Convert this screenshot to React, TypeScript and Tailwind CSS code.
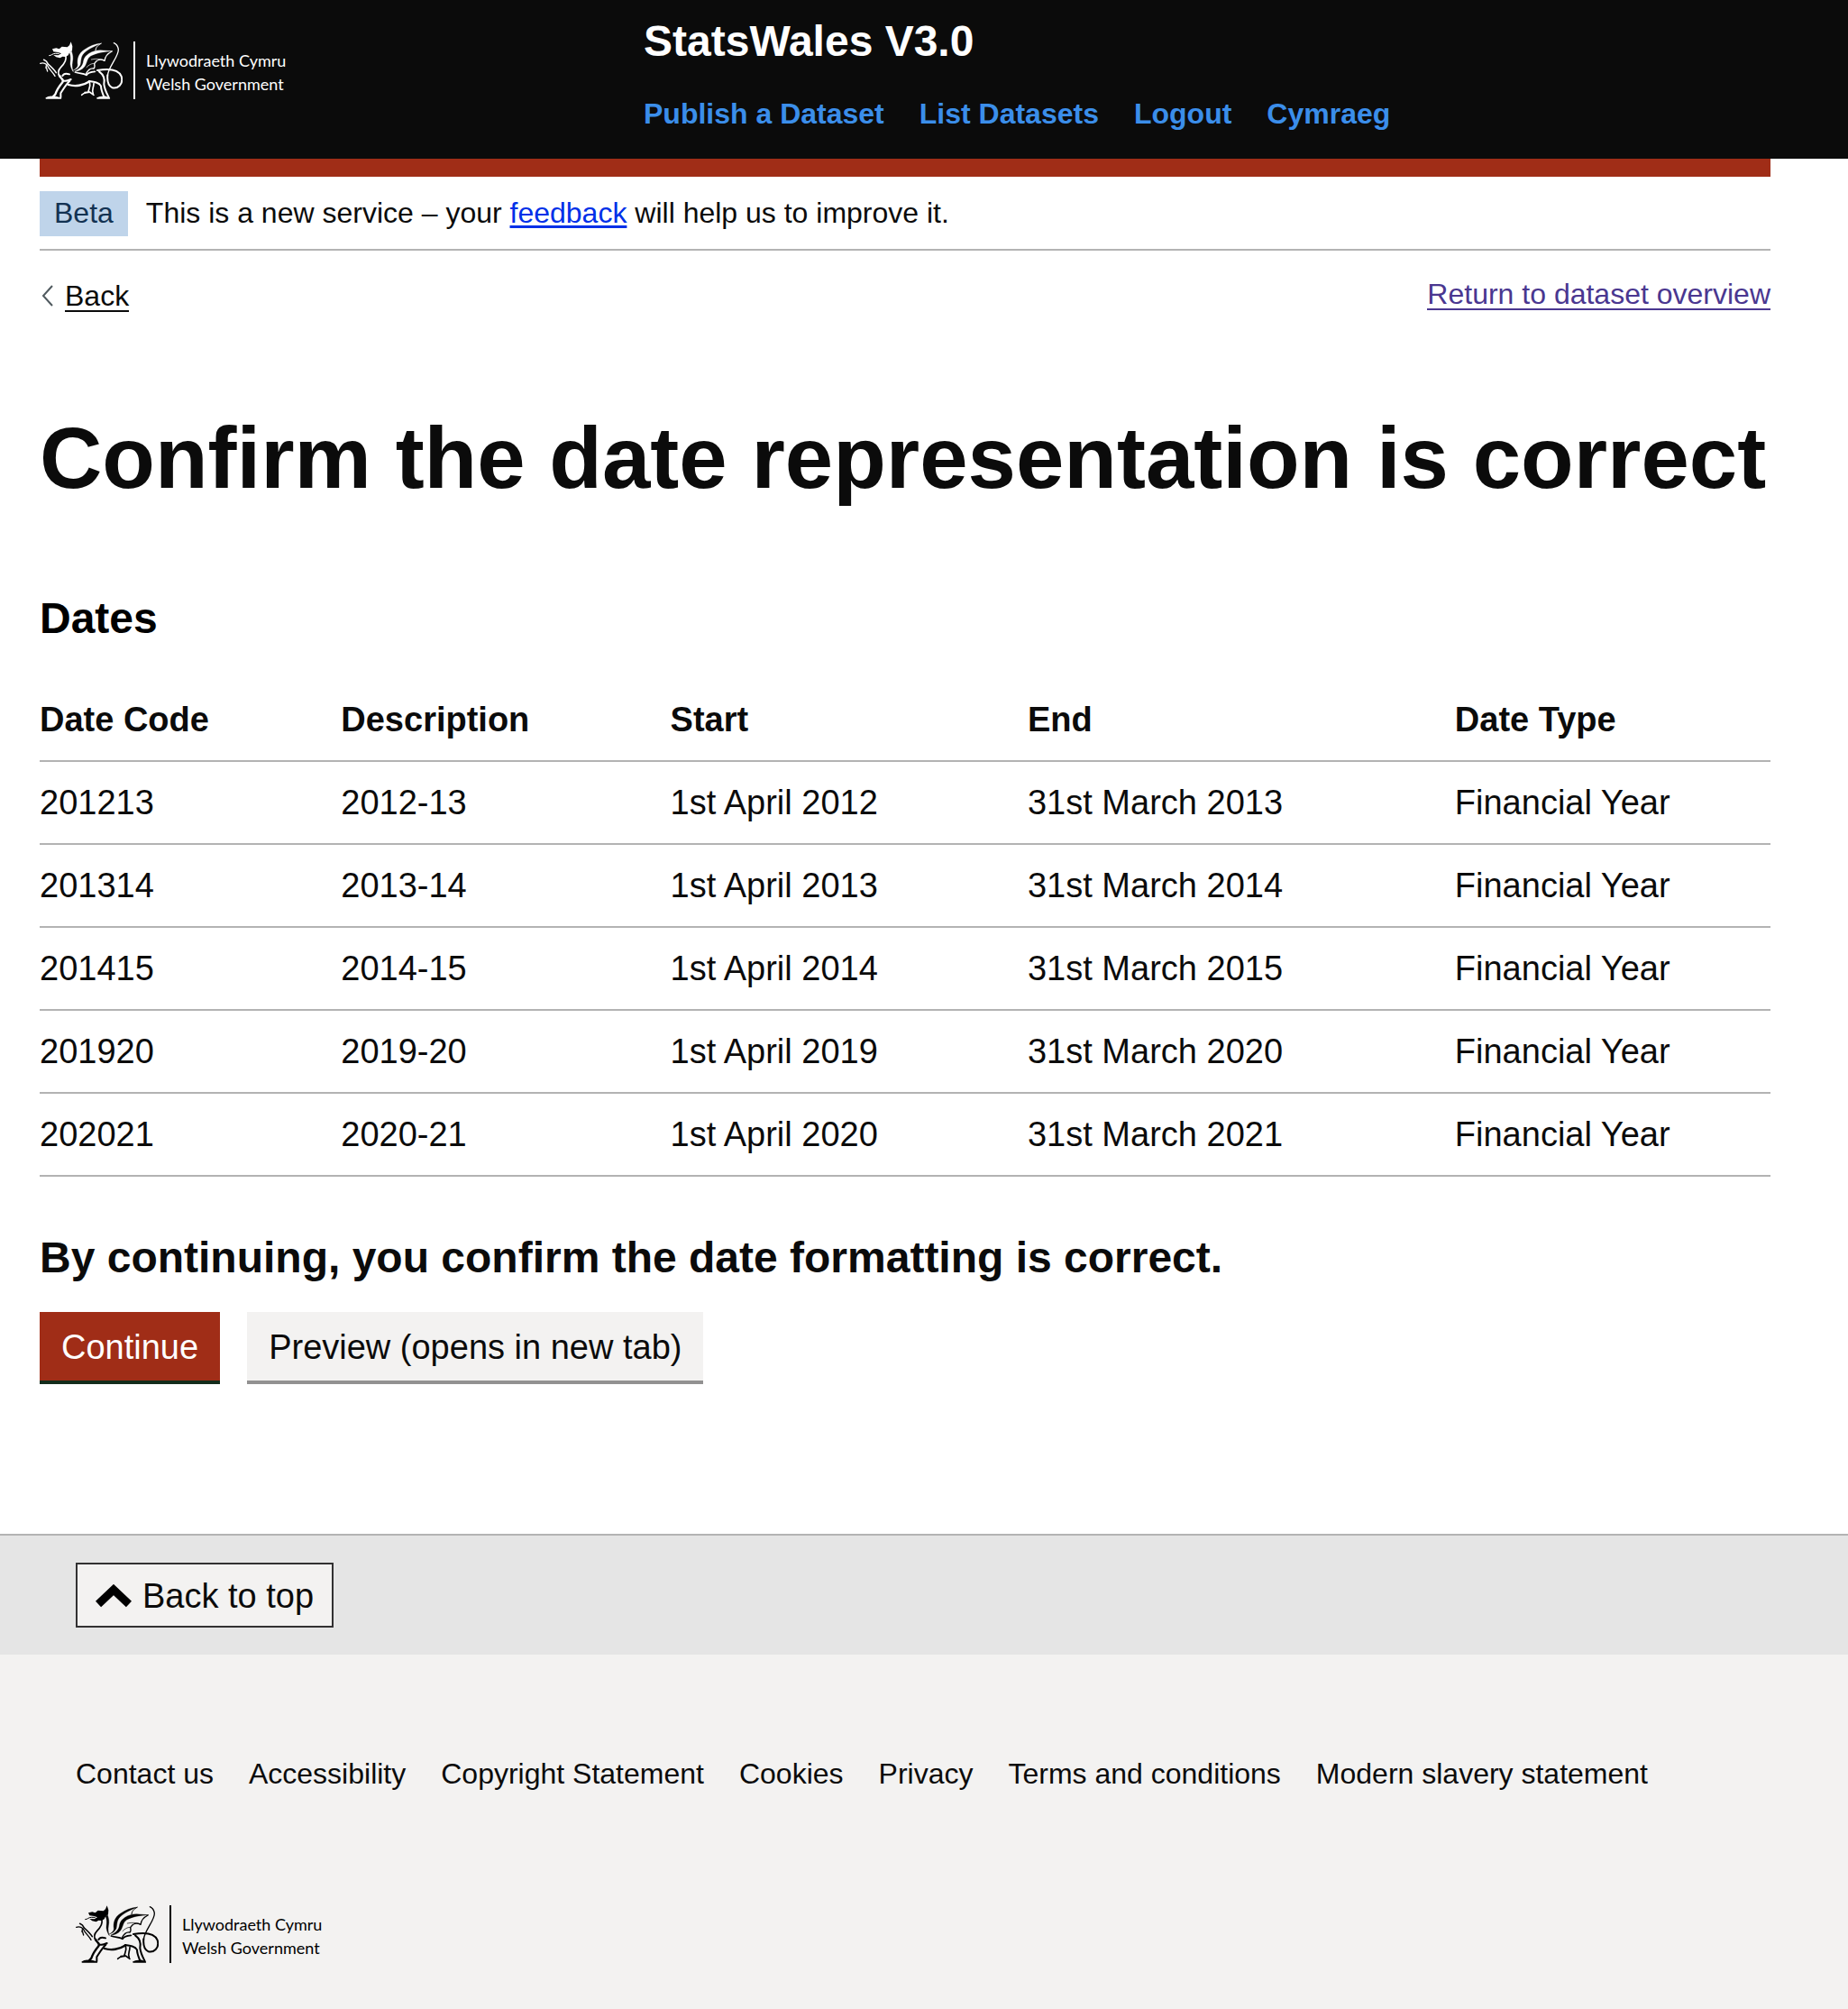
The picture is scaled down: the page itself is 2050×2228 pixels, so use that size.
import React from "react";

const rows = [
  ["201213", "2012-13", "1st April 2012", "31st March 2013", "Financial Year"],
  ["201314", "2013-14", "1st April 2013", "31st March 2014", "Financial Year"],
  ["201415", "2014-15", "1st April 2014", "31st March 2015", "Financial Year"],
  ["201920", "2019-20", "1st April 2019", "31st March 2020", "Financial Year"],
  ["202021", "2020-21", "1st April 2020", "31st March 2021", "Financial Year"],
];
const columns = ["Date Code", "Description", "Start", "End", "Date Type"];
const navLinks = ["Publish a Dataset", "List Datasets", "Logout", "Cymraeg"];
const footerLinks = [
  "Contact us",
  "Accessibility",
  "Copyright Statement",
  "Cookies",
  "Privacy",
  "Terms and conditions",
  "Modern slavery statement",
];

function Dragon() {
  return (
    <svg viewBox="42 48 276 192" className="h-16 w-23 shrink-0" fill="none" stroke="currentColor" strokeLinecap="round" strokeLinejoin="round" aria-hidden="true">
      {/* head */}
      <path fill="currentColor" stroke="none" d="M84 73 L97 70 L107 73 L116 65 L134 67 L141 61 L146 49 L151 64 L150 79 C144 82 140 86 137 94 L128 99 L118 98 L110 103 L97 100 L88 93 L104 94 L114 88 L104 84 L88 82Z" />
      <path strokeWidth="3" d="M74 95 C82 95 84 88 94 88 L106 88" />
      {/* neck */}
      <path fill="currentColor" strokeWidth="1" d="M141 84 C148 98 144 112 144 124 C146 136 150 144 154 149 C150 138 149 128 151 116 C154 102 152 92 148 80Z" />
      <path strokeWidth="5" d="M129 98 C132 112 122 124 113 133 C104 142 101 153 109 166" />
      {/* raised arm */}
      <path strokeWidth="5" d="M56 109 C64 112 67 116 70 123 C80 132 90 141 97 152" />
      <path strokeWidth="4" d="M44 121 C52 118 60 120 66 125 C74 142 86 150 93 163 M63 136 L64 128 M68 147 L64 134" />
      {/* fore legs */}
      <path strokeWidth="7" d="M109 162 C113 174 124 174 118 184 C108 196 98 212 94 224 L84 234" />
      <path strokeWidth="6" d="M142 179 C130 190 122 204 112 220 L112 234" />
      <path strokeWidth="5" fill="currentColor" d="M64 237 C74 229 84 234 92 232 L112 237Z" />
      <path strokeWidth="6" d="M118 162 C122 154 132 154 141 157 M120 178 C128 182 138 178 146 174" />
      {/* belly and back */}
      <path strokeWidth="7" d="M138 192 C160 199 188 194 204 183" />
      <path strokeWidth="5" d="M160 150 C176 156 186 152 198 160 C202 150 214 149 226 148" />
      {/* wings */}
      <path fill="currentColor" strokeWidth="1" d="M154 144 C162 139 169 134 169 126 C166 106 172 88 190 76 C208 63 226 56 248 54 C226 62 204 73 190 86 C178 97 180 112 177 125 C173 134 164 141 154 144Z" />
      <path strokeWidth="3" d="M246 55 C236 60 228 68 228 78" />
      <path fill="currentColor" strokeWidth="1" d="M160 147 C176 138 186 130 188 112 C192 92 216 78 244 77 L285 80 C258 81 230 86 212 96 C198 105 200 120 191 132 C183 142 170 147 160 147Z" />
      <path strokeWidth="4" d="M282 81 C268 88 260 96 258 112 C246 106 232 108 224 122 C226 130 226 134 222 138 C208 136 202 144 196 156" />
      <path strokeWidth="2" d="M214 108 C230 104 244 106 256 110 M198 134 C206 126 212 122 222 121" />
      {/* tail */}
      <path strokeWidth="6" d="M234 144 C270 138 304 140 314 164 C322 192 300 206 284 202 C270 196 266 182 268 160" />
      <path strokeWidth="4" d="M268 162 C270 132 306 98 304 74 C302 62 296 56 289 53" />
      {/* hind legs */}
      <path strokeWidth="6" d="M240 148 C254 158 260 172 256 190 C258 208 266 222 272 234" />
      <path strokeWidth="6" d="M206 180 C222 182 240 184 246 196 C246 210 252 222 256 232" />
      <path strokeWidth="5" fill="currentColor" d="M234 237 C244 230 252 234 260 232 L274 237 Z" />
      <path strokeWidth="5" d="M208 180 C212 196 208 202 204 214 M222 188 C222 202 214 208 220 222 M182 226 C190 216 200 220 208 216 L222 226 M192 218 L206 216" />
    </svg>
  );
}

function Logo() {
  return (
    <a href="#" className="flex h-16 items-center">
      <Dragon />
      <span className="ml-3 h-16 w-0.5 shrink-0 bg-current" />
      <span className="ml-3 pt-1 font-[Lato,sans-serif] text-[18px] leading-[26px] whitespace-nowrap">
        <span className="block">Llywodraeth Cymru</span>
        <span className="block">Welsh Government</span>
      </span>
    </a>
  );
}

export default function App() {
  return (
    <div className="flex min-h-screen flex-col bg-white font-['Liberation_Sans',Arial,sans-serif] text-[38px] leading-[50px] text-[#0b0b0b]">
      <header className="bg-[#0b0b0b] text-white">
        <div className="flex h-44 max-w-[2008px] px-11">
          <div className="w-[670px] shrink-0 pt-[46px]">
            <Logo />
          </div>
          <div className="pt-[21px]">
            <a href="#" className="block text-5xl leading-[50px] font-bold">
              StatsWales V3.0
            </a>
            <nav className="mt-[35px] flex gap-[39px] text-[32px] leading-10 font-bold text-[#3b8eea]">
              {navLinks.map((label) => (
                <a key={label} href="#">
                  {label}
                </a>
              ))}
            </nav>
          </div>
        </div>
      </header>

      <div className="w-full max-w-[2008px] px-11">
        <div className="h-5 bg-[#a02d17]" />
        <div className="flex items-center gap-5 border-b-2 border-[#b3b3b3] pt-4 pb-3.5 text-[32px] leading-10">
          <strong className="bg-[#bfd4ea] px-4 pt-1 pb-1.5 font-normal text-[#133252]">Beta</strong>
          <p className="pb-0.5">
            This is a new service – your{" "}
            <a href="#" className="text-[#0030e8] underline decoration-[3px] underline-offset-3">
              feedback
            </a>{" "}
            will help us to improve it.
          </p>
        </div>
        <div className="flex items-start justify-between pt-8 text-[32px] leading-8">
          <a href="#" className="mt-0.5 flex items-center">
            <svg viewBox="0 0 28 26" className="h-6.5 w-7" fill="none" stroke="#505a5f" strokeWidth="2" aria-hidden="true">
              <path d="M14 1 L4 12 L14 23" />
            </svg>
            <span className="border-b-2 border-current">Back</span>
          </a>
          <a href="#" className="border-b-2 border-current text-[#4a3790]">
            Return to dataset overview
          </a>
        </div>

        <main>
          <h1 className="mt-28 text-8xl leading-[100px] font-bold">Confirm the date representation is correct</h1>
          <h2 className="mt-[98px] text-5xl leading-[60px] font-bold text-black">Dates</h2>
          <table className="mt-[37px] w-full border-collapse text-left">
            <thead>
              <tr className="border-b-2 border-[#b3b3b3]">
                {columns.map((c) => (
                  <th key={c} scope="col" className="py-5 pr-10 font-bold last:pr-0">
                    {c}
                  </th>
                ))}
              </tr>
            </thead>
            <tbody>
              {rows.map((r) => (
                <tr key={r[0]} className="border-b-2 border-[#b3b3b3]">
                  {r.map((cell) => (
                    <td key={cell} className="py-5 pr-10 last:pr-0">
                      {cell}
                    </td>
                  ))}
                </tr>
              ))}
            </tbody>
          </table>
          <h2 className="mt-[60px] text-5xl leading-[60px] font-bold">By continuing, you confirm the date formatting is correct.</h2>
          <div className="mt-[30px] flex gap-[30px] pb-[166px]">
            <button type="button" className="border-b-4 border-[#132c1b] bg-[#a02d17] px-6 pt-[14px] pb-3 text-white">
              Continue
            </button>
            <button type="button" className="border-b-4 border-[#929191] bg-[#f3f2f1] px-6 pt-[14px] pb-3">
              Preview (opens in new tab)
            </button>
          </div>
        </main>
      </div>

      <footer className="flex-1 bg-[#f3f2f1]">
        <div className="flex border-t-2 border-[#b3b3b3] bg-[#e5e5e5] px-21 py-[30px]">
          <a href="#" className="flex items-center border-2 border-[#323132] bg-[#f3f2f1] px-5 pt-2.5 pb-2">
            <svg viewBox="0 0 40 26" className="mr-3 h-6.5 w-10" fill="none" stroke="#000" strokeWidth="9" aria-hidden="true">
              <path d="M3 22 L20 6 L37 22" />
            </svg>
            Back to top
          </a>
        </div>
        <div className="px-21 pt-28 pb-[50px]">
          <nav className="mb-[126px] flex flex-wrap gap-x-[39px] text-[32px] leading-10">
            {footerLinks.map((label) => (
              <a key={label} href="#">
                {label}
              </a>
            ))}
          </nav>
          <div className="text-black">
            <Logo />
          </div>
        </div>
      </footer>
    </div>
  );
}
